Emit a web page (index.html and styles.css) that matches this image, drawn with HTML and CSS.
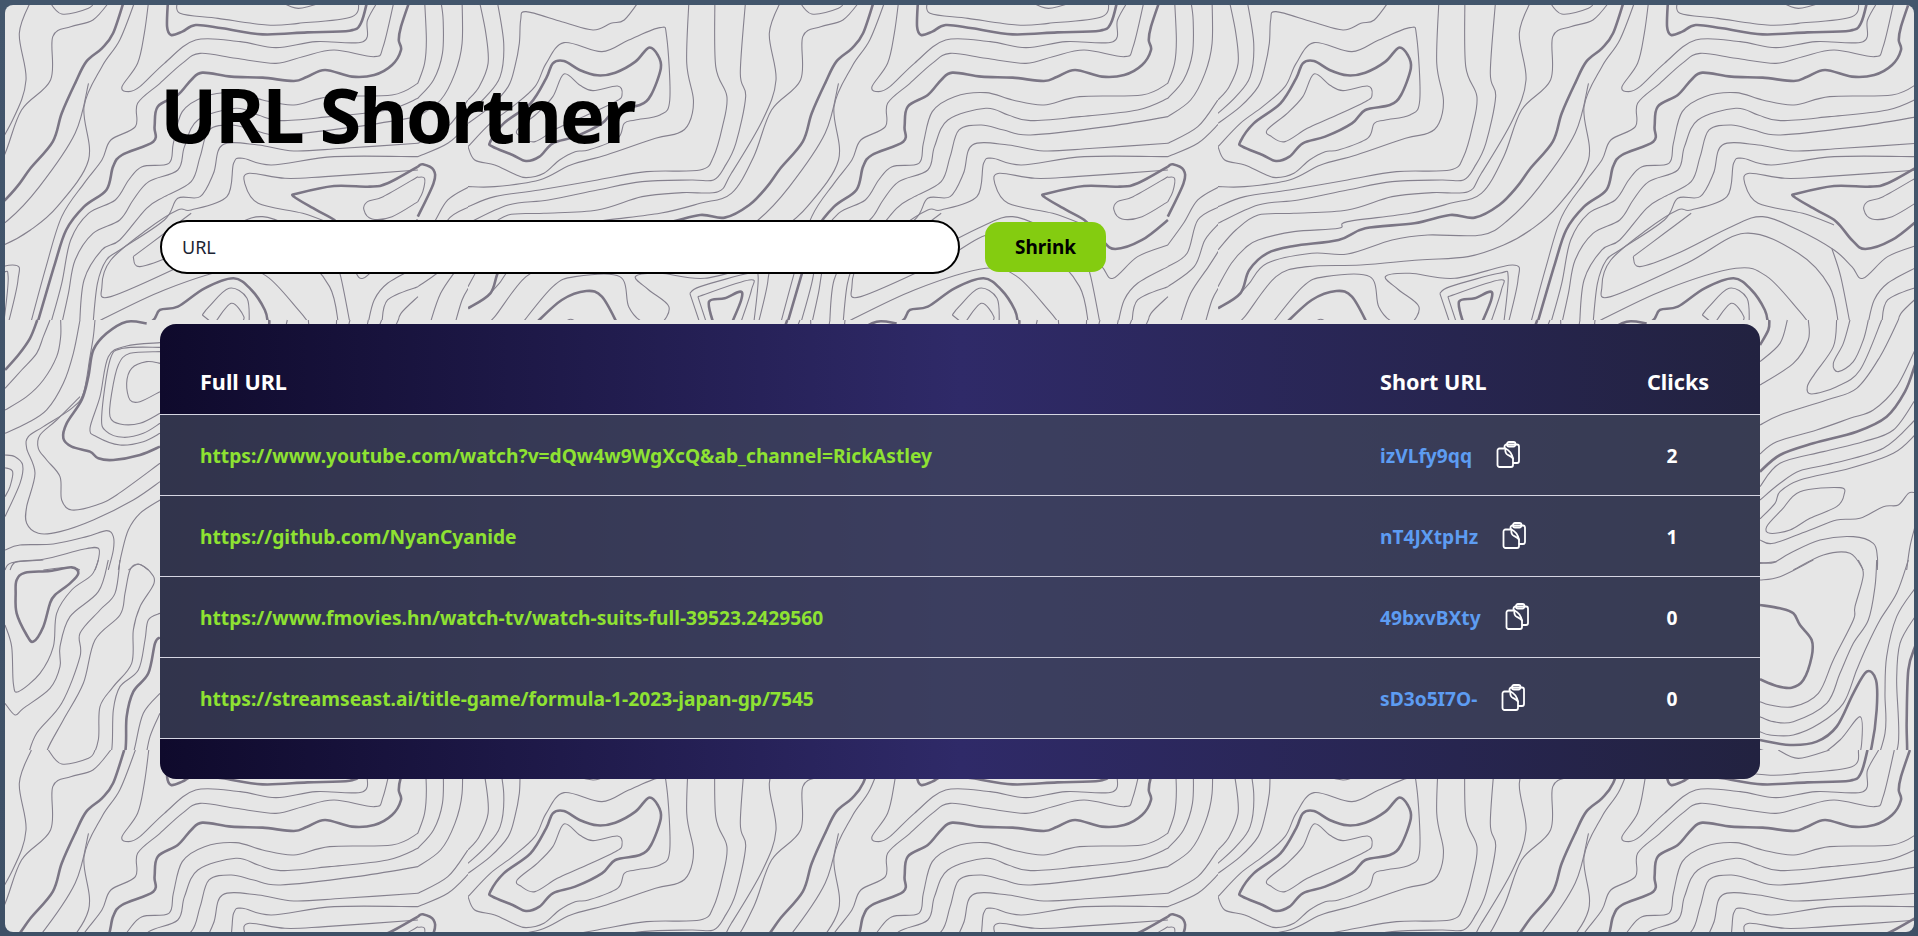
FILE: index.html
```html
<!DOCTYPE html>
<html lang="en">
<head>
  <meta charset="UTF-8">
  <title>URL Shortner</title>
  <link rel="stylesheet" href="styles.css">
</head>
<body>
  <div class="panel">
    <svg class="topo" aria-hidden="true">
      <defs>
        <clipPath id="topStrip">
          <rect width="750" height="320"></rect>
        </clipPath>
        <pattern id="topoTile" x="463" y="-5" width="750" height="750" patternUnits="userSpaceOnUse">
          <g id="topLines" clip-path="url(#topStrip)"></g>
          <g id="sideLines"></g>
        </pattern>
      </defs>
      <rect width="100%" height="100%" fill="url(#topoTile)"></rect>
    </svg>

    <main class="content">
      <h1>URL Shortner</h1>

      <form class="shrink-form">
        <input type="text" class="url-input" placeholder="URL">
        <button type="button" class="shrink-btn">Shrink</button>
      </form>

      <div class="card">
        <table>
          <colgroup>
            <col class="col-full">
            <col class="col-short">
            <col class="col-clicks">
          </colgroup>
          <thead>
            <tr>
              <th>Full URL</th>
              <th>Short URL</th>
              <th class="clicks-head">Clicks</th>
            </tr>
          </thead>
          <tbody>
            <tr>
              <td><a class="full-link" href="#">https://www.youtube.com/watch?v=dQw4w9WgXcQ&amp;ab_channel=RickAstley</a></td>
              <td>
                <div class="short-cell">
                  <a class="short-link" href="#">izVLfy9qq</a>
                  <svg class="copy-icon" viewBox="0 0 24 28"><use href="#copyShape"></use></svg>
                </div>
              </td>
              <td class="clicks">2</td>
            </tr>
            <tr>
              <td><a class="full-link" href="#">https://github.com/NyanCyanide</a></td>
              <td>
                <div class="short-cell">
                  <a class="short-link" href="#">nT4JXtpHz</a>
                  <svg class="copy-icon" viewBox="0 0 24 28"><use href="#copyShape"></use></svg>
                </div>
              </td>
              <td class="clicks">1</td>
            </tr>
            <tr>
              <td><a class="full-link" href="#">https://www.fmovies.hn/watch-tv/watch-suits-full-39523.2429560</a></td>
              <td>
                <div class="short-cell">
                  <a class="short-link" href="#">49bxvBXty</a>
                  <svg class="copy-icon" viewBox="0 0 24 28"><use href="#copyShape"></use></svg>
                </div>
              </td>
              <td class="clicks">0</td>
            </tr>
            <tr>
              <td><a class="full-link" href="#">https://streamseast.ai/title-game/formula-1-2023-japan-gp/7545</a></td>
              <td>
                <div class="short-cell">
                  <a class="short-link" href="#">sD3o5I7O-</a>
                  <svg class="copy-icon" viewBox="0 0 24 28"><use href="#copyShape"></use></svg>
                </div>
              </td>
              <td class="clicks">0</td>
            </tr>
          </tbody>
        </table>
      </div>
    </main>
  </div>

  <svg class="icon-defs" aria-hidden="true">
    <symbol id="copyShape" viewBox="0 0 24 28">
      <g fill="none" stroke="currentColor" stroke-width="1.8" stroke-linecap="round" stroke-linejoin="round">
        <path d="M8.5 6.5V5.5a2 2 0 0 1 2-2h10.500a2 2 0 0 1 2 2v14.500a2 2 0 0 1-2 2h-3.500"/>
        <path d="M11 3.500V3a2 2 0 0 1 2-2h4.500a2 2 0 0 1 2 2v.5a2 2 0 0 1-2 2H13a2 2 0 0 1-2-2z"/>
        <path d="M3.500 7.500h6c3.500 1.500 6.500 6 7.500 10v6.500a2 2 0 0 1-2 2H3.500a2 2 0 0 1-2-2V9.500a2 2 0 0 1 2-2z"/>
        <path d="M9.500 7.500c-.5 3 .5 5.500 2.500 6.500 1.500.7 3.500 1.500 5 3.500"/>
      </g>
    </symbol>
  </svg>

  <script src="contours.js"></script>
</body>
</html>
```

FILE: styles.css
```css
* {
  box-sizing: border-box;
}

body {
  margin: 0;
  height: 936px;
  padding: 5px 4px 4px 5px;
  overflow: hidden;
  background: linear-gradient(180deg, #43566c, #3e5066);
  font-family: "Noto Sans", "Open Sans", sans-serif;
}

.panel {
  position: relative;
  height: 927px;
  overflow: hidden;
  background-color: #e6e6e6;
  border-radius: 8px;
}

.topo {
  position: absolute;
  top: 0;
  left: 0;
  width: 100%;
  height: 100%;
}

.line-thin,
.line-thick {
  fill: none;
  stroke-linejoin: round;
}

.line-thin {
  stroke: #85818e;
  stroke-width: 1.1px;
}

.line-thick {
  stroke: #7b7685;
  stroke-width: 2.6px;
}

.icon-defs {
  position: absolute;
  width: 0;
  height: 0;
}

.content {
  position: relative;
  padding: 59px 154px 0 155px;
}

h1 {
  margin: 0;
  height: 156px;
  font-size: 76px;
  line-height: 100px;
  letter-spacing: -2.5px;
  font-weight: 700;
  color: #000;
}

.shrink-form {
  display: flex;
  align-items: center;
  gap: 25px;
}

.url-input {
  width: 800px;
  height: 54px;
  padding: 0 20px;
  border: 2px solid #000;
  border-radius: 27px;
  background: #fff;
  outline: none;
  font-family: inherit;
  font-size: 18px;
}

.url-input::placeholder {
  color: #1b2433;
  opacity: 1;
}

.shrink-btn {
  width: 121px;
  height: 50px;
  border: none;
  border-radius: 14px;
  background-color: #84cc10;
  color: #000;
  font-family: inherit;
  font-size: 19px;
  font-weight: 700;
  cursor: pointer;
}

.card {
  margin-top: 50px;
  padding: 40px 0;
  border-radius: 16px;
  background: linear-gradient(90deg, #0f0a2c, #2f2a68 50%, #222240);
}

table {
  width: 1600px;
  table-layout: fixed;
  border-collapse: collapse;
  color: #fff;
  font-size: 19.2px;
}

.col-full {
  width: 1180px;
}

.col-short {
  width: 300px;
}

.col-clicks {
  width: 120px;
}

th {
  height: 50px;
  padding: 0 0 14px 40px;
  font-size: 21.6px;
  font-weight: 700;
  text-align: left;
  border-bottom: 1px solid #d5d5e2;
}

th.clicks-head {
  padding-left: 7px;
}

td {
  height: 81px;
  padding: 2px 0 0 40px;
  border-bottom: 1px solid #d5d5e2;
  background-color: rgba(66, 72, 92, 0.68);
  font-weight: 700;
}

td.clicks {
  padding: 2px 56px 0 0;
  text-align: center;
}

a {
  text-decoration: none;
}

.full-link {
  color: #8ee232;
}

.short-link {
  color: #5d9cf2;
}

.short-cell {
  display: flex;
  align-items: center;
  gap: 24px;
}

.copy-icon {
  width: 24px;
  height: 28px;
  margin-top: -2px;
  color: #fff;
}
```

FILE: contours.js
```js
// contour lines of the background tile, traced per region
const SVG_NS = "http://www.w3.org/2000/svg";

const regions = [
  {
    // top strip, whole tile width
    parent: "topLines",
    transform: "scale(0.4464 0.3333)",
    thick: [
      "1008,0 1006,80 1015,105 1040,95 1070,75 1130,85 1220,103 1320,97 1415,92 1440,70 1455,0",
      "910,0 885,100 860,145 825,185 800,250 770,340 750,425 700,505 670,560 630,615 575,653 520,645 440,670 330,685 270,720 170,738 110,760 70,810 50,880 0,925",
      "1550,0 1530,80 1525,120 1530,150 1510,195 1470,225 1420,230 1360,210 1320,230 1290,243 1220,233 1150,230 1085,218 1060,240 1030,285 985,320 978,380 975,425 905,465 885,500 870,570 820,620 780,690 755,790 735,880 715,972",
      "z 50,425 80,370 140,310 175,235 190,190 215,183 250,210 290,226 330,218 375,185 405,143 425,165 432,205 410,285 385,315 330,330 300,370 240,410 190,430 160,470 130,483 100,465 55,440",
      "1568,500 1500,550 1460,560 1380,558 1300,580 1290,590 1340,630 1385,665 1420,720 1450,747 1510,720 1568,660",
      "150,972 210,900 265,873 300,890 335,972",
      "550,972 540,905 575,895 610,875 612,900 590,972",
      "905,972 970,965 990,930 1030,920 1090,865 1155,835 1195,870 1225,930 1232,972"
    ],
    thin: [
      "385,0 350,60 320,70 280,90 210,65 130,35 118,60 115,130 105,200 90,260 50,320 0,370",
      "0,440 15,480 60,495 100,520 130,533 170,520 205,480 240,455 270,450 335,415 350,370 375,360 430,345 452,300 445,110 430,83 360,120 300,155 215,128 175,190 150,260 100,320 50,370 0,440",
      "z 215,222 190,290 155,340 110,390 120,410 150,425 200,385 250,355 330,305 345,285 335,258 280,272 250,255",
      "495,0 490,190 505,300 495,370 470,400 420,415 310,465 230,495 160,540 60,560 0,560",
      "553,0 555,200 580,290 570,380 550,470 520,510 400,515 290,540 160,570 60,590 0,620",
      "622,0 610,220 622,290 600,430 575,500 550,540 500,540 390,545 290,570 180,600 90,615 0,670",
      "702,0 675,100 690,240 660,360 590,520 560,575 480,578 390,590 290,630 170,640 90,645 40,690 0,750",
      "740,0 770,42 830,25 845,0",
      "880,0 840,60 790,80 750,110 745,240 680,330 640,470 590,580 520,610 430,640 290,665 270,685 170,695 90,720 60,745 30,790 0,860",
      "830,250 800,400 720,560 650,660 590,705 470,705 390,720 290,762 210,760 110,790 70,850 50,880",
      "935,0 900,120 860,200 820,320 830,480 760,620 700,690 640,735 560,770 450,780 320,795 200,800 130,830 60,950 40,972",
      "965,0 955,100 940,190 905,260 920,275 945,260 1000,190 1070,120 1170,125 1250,143 1340,125 1445,125 1455,60 1480,0",
      "1030,0 1035,40 1120,55 1230,75 1300,70 1420,50 1435,0",
      "1255,0 1300,25 1370,0",
      "1515,0 1490,140 1470,170 1380,150 1310,170 1250,190 1160,175 1080,160 1040,190 990,250 940,310 935,380 880,420 860,480 820,550 770,650 735,800 700,972",
      "1568,250 1510,285 1370,290 1290,315 1220,300 1160,278 1090,290 1040,335 1020,430 1010,490 950,500 920,540 890,600 830,640 790,720 770,850 745,972",
      "1568,295 1500,330 1370,350 1260,362 1210,345 1160,325 1075,360 1045,440 1030,510 965,545 930,600 900,660 840,700 800,780 785,880 770,972",
      "1568,350 1430,380 1260,405 1200,390 1150,375 1100,390 1080,470 1060,545 1000,590 960,625 900,720 860,750 820,840 810,972",
      "1568,430 1400,445 1290,453 1210,435 1130,435 1110,520 1080,590 1030,595 1000,660 900,750 870,780 850,850 840,972",
      "1568,470 1380,470 1240,495 1175,475 1155,490 1140,590 1060,630 1030,630 960,690 880,780 860,860 880,890 1050,790 1180,700 1300,760 1370,860 1390,972",
      "1568,510 1360,530 1270,535 1190,520 1180,550 1210,610 1310,640 1380,675",
      "930,770 945,800 1030,760 1150,680 1220,650 1300,690 1380,750 1420,800 1445,835 1500,770 1568,735",
      "930,770 1000,700 1060,640",
      "840,972 1000,870 1160,805 1230,830 1300,930 1325,972",
      "1568,530 1490,590 1455,605 1447,630 1465,657 1510,650 1568,605",
      "1375,745 1395,830 1416,972",
      "1568,800 1500,850 1470,900 1456,972",
      "1568,860 1500,900 1487,972",
      "1568,890 1530,940 1523,972",
      "25,0 40,100 45,190 25,260 0,300",
      "65,0 80,130 72,230 40,290 0,340",
      "210,972 230,958 250,972",
      "120,972 190,860 240,830 340,830 360,920 390,965 430,972 450,920 405,870 375,830 430,820 530,835 660,795 672,840 650,972",
      "497,880 520,860 630,820 650,830 640,972",
      "497,880 520,972",
      "515,890 630,840 635,870 610,972",
      "515,890 535,972",
      "1085,945 1100,920 1145,865 1185,895 1190,972",
      "1085,945 1110,972",
      "1115,965 1150,910 1178,950 1170,972"
    ]
  },
  {
    // last part of the tile width, taken from the middle crop
    parent: "topLines",
    transform: "translate(212 0) scale(0.3571 0.3333)",
    thick: [
      "1366,500 1380,493 1410,510 1410,550 1366,650"
    ],
    thin: [
      "1366,250 1385,190 1390,120 1385,0",
      "1366,295 1410,240 1435,160 1437,60 1430,0",
      "1366,350 1430,300 1470,220 1490,130 1490,0",
      "1366,430 1450,380 1506,300",
      "1366,470 1450,430 1510,370",
      "1366,532 1385,535 1380,575 1366,605",
      "1510,560 1450,600 1410,670 1366,735",
      "1510,620 1450,660 1420,760 1366,800",
      "1510,670 1470,720 1440,800 1366,860",
      "1510,750 1480,800 1430,880 1400,972",
      "1510,860 1490,900 1470,972"
    ]
  },
  {
    // left margin, upper half
    parent: "sideLines",
    transform: "translate(282 320) scale(0.3333)",
    thick: [
      "15,150 55,105 90,55 112,0",
      "440,10 380,5 320,40 280,90 265,170 245,240 200,310 190,355 215,380 270,395 295,415 340,420 420,405 480,380"
    ],
    thin: [
      "15,205 65,150 110,100 130,50 150,0",
      "15,270 80,230 130,180 170,110 182,50 182,0",
      "15,340 80,310 140,270 190,190 220,100 240,0",
      "285,0 280,50 270,110 250,220 215,265 130,320 85,350 80,385 105,460 80,560 80,610 115,640 180,635 280,600 400,540 480,485",
      "480,68 380,78 325,110 300,230 270,325 290,350 360,375 430,365 480,340",
      "480,82 370,85 330,120 305,290 320,335 370,352 430,340 480,310",
      "480,95 390,100 355,135 335,220 330,290 360,312 420,310 480,280",
      "480,130 440,125 395,145 380,190 390,240 420,245 480,215",
      "15,405 45,410 68,435 60,490 15,590",
      "15,443 38,455 30,500 15,530",
      "240,230 170,300 120,345 115,385 140,420 180,470 185,540 215,570 290,555 350,525 480,430",
      "15,690 60,675 160,672 260,650 320,632 340,650 340,690 325,750",
      "30,750 50,725 130,718 250,688 295,685 295,720 285,750",
      "130,750 210,742 240,750",
      "480,540 420,580 385,630 365,700 355,750",
      "385,750 415,733 445,750"
    ]
  },
  {
    // left margin, lower half
    parent: "sideLines",
    transform: "translate(282 560) scale(0.3333)",
    thick: [
      "z 50,60 75,38 150,33 215,22 235,40 210,70 165,105 150,130 130,200 100,245 80,225 50,160 47,100",
      "480,232 465,250 445,340 400,395 380,470 375,580 340,670 270,750"
    ],
    thin: [
      "15,30 35,8 130,0",
      "295,0 275,45 215,90 170,160 160,260 120,340 55,395 40,370 35,260 15,195",
      "325,0 295,95 210,170 180,260 180,320 150,385 70,445 45,465 15,430",
      "360,0 345,100 300,150 240,220 240,290 185,430 110,520 80,600 55,680 60,750",
      "z 415,12 450,35 462,70 420,140 400,210 395,310 340,380 300,440 295,540 270,590 200,612 150,600 142,570 190,480 250,370 285,240 360,165 375,100 390,30",
      "480,160 445,180 435,240 415,330 360,380 340,450 335,570 310,610 220,650 170,660 155,690 155,750",
      "480,400 430,460 405,560 385,640 355,710 325,750",
      "480,460 450,530 430,620 395,700 395,750"
    ]
  },
  {
    // right margin, upper half
    parent: "sideLines",
    transform: "translate(532 320) scale(0.3333)",
    thick: [
      "30,75 55,30 58,0",
      "30,455 90,405 190,370 320,335 410,290 465,215 495,135"
    ],
    thin: [
      "30,125 90,70 112,0",
      "30,195 130,130 175,60 175,0",
      "260,0 250,80 195,160 172,200 185,222 260,200 330,150 395,0",
      "300,0 280,70 250,130 265,155 310,125 340,60 355,0",
      "30,315 90,285 230,240 320,205 390,110 445,0",
      "30,402 80,365 200,330 300,295 370,270 440,200 495,90",
      "30,500 90,430 220,395 340,365 430,330 495,240",
      "30,540 90,490 150,452 250,430 400,385 495,300",
      "30,597 75,550 90,515 150,480 300,445 430,400 495,345",
      "z 150,515 270,503 282,525 260,560 180,595 120,630 60,640 50,620 95,570",
      "30,660 70,670 180,630 260,600 330,595 400,560 445,555 475,520 495,518",
      "30,728 70,728 120,700 210,660 310,650 370,670 382,710 382,750",
      "130,750 220,705 300,700 340,750",
      "495,620 480,680 470,750"
    ]
  },
  {
    // right margin, lower half
    parent: "sideLines",
    transform: "translate(532 560) scale(0.3333)",
    thick: [
      "30,135 90,145 130,160 150,195 185,240 185,290 160,360 125,383 80,378 30,358",
      "30,540 120,555 200,545 260,500 310,400 350,335 378,360 380,450 365,560 340,640 300,660 200,665 50,678 0,670",
      "495,260 475,330 470,490 470,600 445,660 455,720 450,750"
    ],
    thin: [
      "30,10 80,5",
      "30,60 90,50 190,0",
      "325,0 340,45 315,140 310,180 250,300 205,400 130,440 60,435 30,425",
      "380,0 375,80 355,180 310,250 270,340 230,430 130,485 70,485 30,470",
      "475,0 440,100 390,180 350,260 320,330 280,430 210,490 130,525 60,525 30,515",
      "30,568 120,595 200,590 270,540 330,470 335,550 320,600 280,625 180,640 50,645 0,640",
      "495,85 440,170 410,290 405,400 405,520 360,660 345,690 250,695 90,710 0,695",
      "495,170 450,250 440,360 445,550 405,660 405,700 385,740"
    ]
  }
];

function parseLine(line) {
  const closed = line.startsWith("z ");
  const text = closed ? line.slice(2) : line;
  const pts = text.split(" ").map(p => p.split(",").map(Number));
  return { pts, closed };
}

// catmull-rom through the traced points
function smoothPath({ pts, closed }) {
  const n = pts.length;
  const at = i => closed ? pts[(i + n) % n] : pts[Math.max(0, Math.min(n - 1, i))];
  let d = `M${pts[0][0]} ${pts[0][1]}`;
  const last = closed ? n : n - 1;

  for (let i = 0; i < last; i++) {
    const [p0, p1, p2, p3] = [at(i - 1), at(i), at(i + 1), at(i + 2)];
    const c1x = p1[0] + (p2[0] - p0[0]) / 6;
    const c1y = p1[1] + (p2[1] - p0[1]) / 6;
    const c2x = p2[0] - (p3[0] - p1[0]) / 6;
    const c2y = p2[1] - (p3[1] - p1[1]) / 6;
    d += `C${c1x.toFixed(1)} ${c1y.toFixed(1)} ${c2x.toFixed(1)} ${c2y.toFixed(1)} ${p2[0]} ${p2[1]}`;
  }
  return closed ? d + "Z" : d;
}

function addLines(group, lines, className) {
  lines.forEach(line => {
    const path = document.createElementNS(SVG_NS, "path");
    path.setAttribute("d", smoothPath(parseLine(line)));
    path.setAttribute("class", className);
    path.setAttribute("vector-effect", "non-scaling-stroke");
    group.appendChild(path);
  });
}

regions.forEach(region => {
  const group = document.createElementNS(SVG_NS, "g");
  group.setAttribute("transform", region.transform);
  addLines(group, region.thin, "line-thin");
  addLines(group, region.thick, "line-thick");
  document.getElementById(region.parent).appendChild(group);
});
```
